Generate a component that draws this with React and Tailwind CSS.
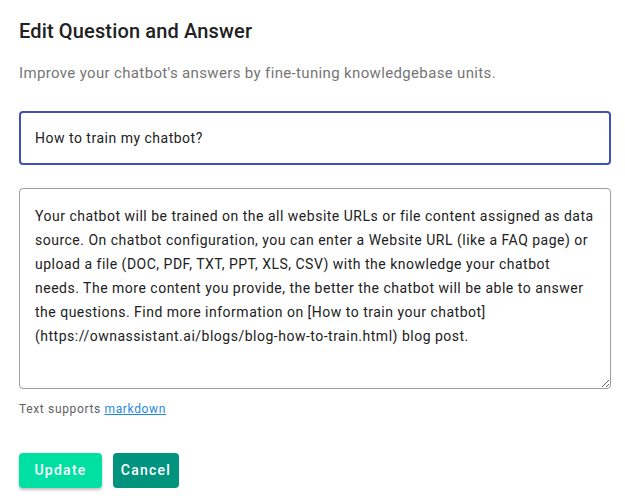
import React, { useState } from "react";

const EditQA = () => {
  const [question, setQuestion] = useState("How to train my chatbot?");
  const [answer, setAnswer] = useState(
    "Your chatbot will be trained on the all website URLs or file content assigned as data source. On chatbot configuration, you can enter a Website URL (like a FAQ page) or upload a file (DOC, PDF, TXT, PPT, XLS, CSV) with the knowledge your chatbot needs. The more content you provide, the better the chatbot will be able to answer the questions. Find more information on [How to train your chatbot](https://ownassistant.ai/blogs/blog-how-to-train.html) blog post."
  );

  return (
    <div className="min-h-screen bg-white px-[19px] pt-[17px] font-['Roboto',sans-serif]">
      <h2 className="text-[20px] leading-[28px] font-medium text-[#212121] tracking-[0.15px]">
        Edit Question and Answer
      </h2>

      <p className="mt-[16px] text-[15px] leading-[24px] text-[#757575] tracking-[0.35px]">
        Improve your chatbot's answers by fine-tuning knowledgebase units.
      </p>

      <input
        type="text"
        value={question}
        onChange={(e) => setQuestion(e.target.value)}
        className="mt-[26px] block w-[592px] h-[54px] px-[14px] border-2 border-[#3f51b5] rounded-[4px] text-[14px] text-[#212121] tracking-[0.5px] outline-none caret-[#3f51b5]"
      />

      <textarea
        value={answer}
        onChange={(e) => setAnswer(e.target.value)}
        rows={6}
        className="mt-[23px] block w-[592px] h-[201px] px-[15px] pt-[15px] border border-[#9e9e9e] rounded-[4px] text-[14px] leading-[24px] text-[#212121] tracking-[0.5px] outline-none resize-y"
      />

      <p className="mt-[12px] text-[12px] leading-[16px] text-[#616161] tracking-[0.65px]">
        Text supports{" "}
        <a href="#" className="text-[#1e88e5] underline">
          markdown
        </a>
      </p>

      <div className="mt-[36px] flex gap-[11px]">
        <button className="h-[35px] w-[83px] rounded-[4px] bg-[#00e0a3] text-white text-[14px] font-medium tracking-[1.25px] shadow-[0_2px_3px_rgba(0,0,0,0.25)]">
          Update
        </button>
        <button className="h-[35px] w-[66px] rounded-[4px] bg-[#00937e] text-white text-[14px] font-medium tracking-[1.25px]">
          Cancel
        </button>
      </div>
    </div>
  );
};

export default EditQA;
